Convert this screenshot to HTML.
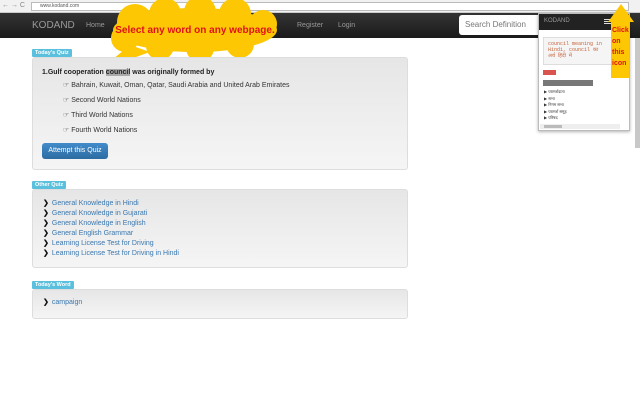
<!DOCTYPE html>
<html><head><style>
*{margin:0;padding:0;box-sizing:border-box}
body{width:640px;height:400px;overflow:hidden;background:#fff;font-family:"Liberation Sans",sans-serif;position:relative;font-size:7px}
.abs{position:absolute}
.panel{position:absolute;left:32px;width:376px;border:1px solid #ddd;border-radius:3px;background:linear-gradient(#e6e6e6,#f5f5f5)}
.tag{position:absolute;left:32px;background:#5bc0de;color:#fff;font-weight:bold;font-size:5.5px;padding:1px 3px;border-radius:1px}
.lnk{color:#3a78b0;font-size:7px;height:10px;line-height:10px}
.lnk b{color:#111;font-size:7px;margin-right:3px}
.opt{position:absolute;left:63px;font-size:7px;color:#333}
</style></head><body>
<!-- browser bar -->
<div class="abs" style="left:0;top:0;width:640px;height:13px;background:#f1f1f1;border-bottom:1px solid #ccc"></div>
<div class="abs" style="left:2px;top:2px;font-size:7px;color:#888">← → C</div>
<div class="abs" style="left:31px;top:2px;width:598px;height:9px;background:#fff;border:1px solid #bbb;font-size:5px;color:#555;padding-left:8px;line-height:7px">www.kodand.com</div>
<!-- navbar -->
<div class="abs" style="left:0;top:13px;width:640px;height:25px;background:linear-gradient(#333,#1b1b1b)"></div>
<div class="abs" style="left:32px;top:20px;color:#999;font-size:10px">KODAND</div>
<div class="abs" style="left:86px;top:22px;color:#999;font-size:7px">Home</div>
<div class="abs" style="left:297px;top:22px;color:#999;font-size:7px">Register</div>
<div class="abs" style="left:338px;top:22px;color:#999;font-size:7px">Login</div>
<div class="abs" style="left:459px;top:15px;width:90px;height:20px;background:#fff;border-radius:3px;color:#777;font-size:8px;padding:5px 6px">Search Definition</div>
<!-- cloud -->
<svg class="abs" style="left:95px;top:0" width="200" height="72">
<g fill="#fdc704">
<ellipse cx="100" cy="30" rx="82" ry="22"/>
<circle cx="40" cy="22" r="18"/><circle cx="70" cy="14" r="16"/><circle cx="105" cy="12" r="16"/><circle cx="140" cy="14" r="16"/><circle cx="168" cy="24" r="14"/>
<circle cx="30" cy="38" r="14"/><circle cx="65" cy="46" r="14"/><circle cx="105" cy="48" r="14"/><circle cx="145" cy="44" r="14"/>
<path d="M35 45 L5 70 L55 52 Z"/>
</g>
<text x="100" y="33" text-anchor="middle" fill="#e0101a" font-weight="bold" font-size="10" font-family="Liberation Sans,sans-serif">Select any word on any webpage.</text>
</svg>
<!-- quiz -->
<div class="tag" style="top:49px">Today's Quiz</div>
<div class="panel" style="top:57px;height:113px"></div>
<div class="abs" style="left:42px;top:69px;font-size:7px;font-weight:bold;color:#222">1.Gulf cooperation <span style="background:#aaa">council</span> was originally formed by</div>
<div class="opt" style="top:81px">☞ Bahrain, Kuwait, Oman, Qatar, Saudi Arabia and United Arab Emirates</div>
<div class="opt" style="top:96px">☞ Second World Nations</div>
<div class="opt" style="top:111px">☞ Third World Nations</div>
<div class="opt" style="top:126px">☞ Fourth World Nations</div>
<div class="abs" style="left:42px;top:143px;width:66px;height:16px;background:linear-gradient(#428bca,#2d6ca2);border-radius:3px;color:#fff;font-size:7px;text-align:center;line-height:16px">Attempt this Quiz</div>
<!-- other quiz -->
<div class="tag" style="top:181px">Other Quiz</div>
<div class="panel" style="top:189px;height:79px"></div>
<div class="abs" style="left:43px;top:199px">
<div class="lnk"><b>❯</b>General Knowledge in Hindi</div>
<div class="lnk"><b>❯</b>General Knowledge in Gujarati</div>
<div class="lnk"><b>❯</b>General Knowledge in English</div>
<div class="lnk"><b>❯</b>General English Grammar</div>
<div class="lnk"><b>❯</b>Learning License Test for Driving</div>
<div class="lnk"><b>❯</b>Learning License Test for Driving in Hindi</div>
</div>
<div class="tag" style="top:281px">Today's Word</div>
<div class="panel" style="top:289px;height:30px"></div>
<div class="abs" style="left:43px;top:298px"><div class="lnk"><b>❯</b>campaign</div></div>
<!-- scrollbar -->
<div class="abs" style="left:635px;top:38px;width:5px;height:110px;background:#c8c8c8"></div>
<!-- popup -->
<div class="abs" style="left:538px;top:13px;width:92px;height:118px;background:#fff;border:1px solid #bbb;box-shadow:0 1px 3px rgba(0,0,0,.3)"></div>
<div class="abs" style="left:539px;top:14px;width:90px;height:16px;background:#222;color:#999;font-size:6px;padding:4px 5px">KODAND</div>
<div class="abs" style="left:604px;top:19px;width:8px;height:1px;background:#ddd;box-shadow:0 2px 0 #ddd,0 4px 0 #ddd"></div>
<div class="abs" style="left:543px;top:37px;width:78px;height:28px;background:#f5f5f5;border:1px solid #ddd;font-family:'Liberation Mono',monospace;font-size:5px;color:#c7623a;padding:3px 4px;line-height:6px">council meaning in Hindi, council का<br>अर्थ हिंदी में</div>
<div class="abs" style="left:543px;top:70px;width:13px;height:5px;background:#d9534f"></div>
<div class="abs" style="left:543px;top:80px;width:50px;height:6px;background:#777"></div>
<div class="abs" style="left:544px;top:89px;font-size:4px;color:#333;line-height:6.5px">▶ परामर्शदाता<br>▶ सभा<br>▶ निगम सभा<br>▶ परामर्श समूह<br>▶ परिषद</div>
<div class="abs" style="left:540px;top:124px;width:80px;height:5px;background:#eee"></div>
<div class="abs" style="left:544px;top:125px;width:18px;height:3px;background:#bbb"></div>
<!-- arrow -->
<svg class="abs" style="left:608px;top:4px" width="32" height="74">
<path d="M13 0 L26 18 L21 18 L21 74 L3 74 L3 18 L0 18 Z" fill="#fdc704"/>
<text fill="#e0101a" font-size="7" font-weight="bold" font-family="Liberation Sans,sans-serif"><tspan x="4" y="28">Click</tspan><tspan x="4" y="39">on</tspan><tspan x="4" y="50">this</tspan><tspan x="4" y="61">icon</tspan></text>
</svg>
</body></html>
